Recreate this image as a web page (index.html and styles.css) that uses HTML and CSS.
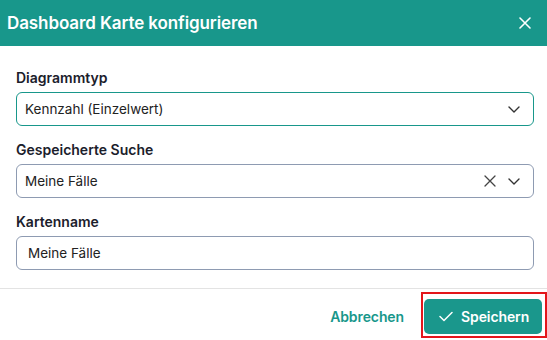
FILE: index.html
```html
<!DOCTYPE html>
<html>
<head>
    <meta charset="UTF-8">
    <title>Dashboard Karte konfigurieren</title>
    <link rel="stylesheet" href="styles.css">
</head>
<body>
    <div class="dialog">
        <div class="dialog-header">
            <h2>Dashboard Karte konfigurieren</h2>
            <button class="close-button" aria-label="Schließen">
                <svg width="12" height="12" viewBox="0 0 12 12"><path d="M1 1L11 11M11 1L1 11" stroke="#fff" stroke-width="1.6" stroke-linecap="round"/></svg>
            </button>
        </div>

        <div class="dialog-body">
            <div class="field">
                <label>Diagrammtyp</label>
                <div class="select focused">
                    <span class="value">Kennzahl (Einzelwert)</span>
                    <svg class="chevron" width="12" height="7" viewBox="0 0 12 7"><path d="M1 1L6 6L11 1" fill="none" stroke="#333" stroke-width="1.4" stroke-linecap="round" stroke-linejoin="round"/></svg>
                </div>
            </div>
            <div class="field">
                <label>Gespeicherte Suche</label>
                <div class="select">
                    <span class="value">Meine Fälle</span>
                    <svg class="clear" width="12" height="12" viewBox="0 0 12 12"><path d="M1 1L11 11M11 1L1 11" stroke="#444" stroke-width="1.3" stroke-linecap="round"/></svg>
                    <svg class="chevron" width="12" height="7" viewBox="0 0 12 7"><path d="M1 1L6 6L11 1" fill="none" stroke="#333" stroke-width="1.4" stroke-linecap="round" stroke-linejoin="round"/></svg>
                </div>
            </div>
            <div class="field">
                <label>Kartenname</label>
                <input type="text" class="text-input" value="Meine Fälle">
            </div>
        </div>

        <div class="dialog-footer">
            <button class="cancel-button">Abbrechen</button>
            <span class="highlight">
                <button class="save-button">
                    <svg width="14" height="11" viewBox="0 0 14 11"><path d="M1 5.5L5 9.5L13 1.5" fill="none" stroke="#fff" stroke-width="1.5" stroke-linecap="round" stroke-linejoin="round"/></svg>
                    Speichern
                </button>
            </span>
        </div>
    </div>
</body>
</html>
```

FILE: styles.css
```css
body {
    margin: 0;
    font-family: Inter, "Noto Sans", sans-serif;
    background: #fff;
    color: #1c2230;
}
.dialog {
    width: 547px;
    height: 340px;
    display: flex;
    flex-direction: column;
    overflow: hidden;
}
.dialog-header {
    height: 46px;
    background-color: #18978b;
    display: flex;
    align-items: center;
    justify-content: space-between;
    padding: 0 16px 0 7px;
    flex-shrink: 0;
}
.dialog-header h2 {
    margin: 0;
    color: #fff;
    font-size: 17px;
    font-weight: 600;
    letter-spacing: -0.1px;
}
.close-button {
    background: none;
    border: none;
    padding: 0;
    display: flex;
    cursor: pointer;
}
.dialog-body {
    padding: 22px 13px 18px 16px;
    display: flex;
    flex-direction: column;
    gap: 14px;
    border-bottom: 1px solid #e3e3e3;
}
.field {
    display: flex;
    flex-direction: column;
    gap: 4px;
}
.field label {
    font-size: 14px;
    line-height: 20px;
    font-weight: 600;
    color: #1b202b;
}
.select,
.text-input {
    box-sizing: border-box;
    height: 34px;
    border: 1px solid #8e9bb2;
    border-radius: 6px;
    font-family: inherit;
    font-size: 13.5px;
    color: #222;
}
.select {
    display: flex;
    align-items: center;
    padding: 0 13px 0 8px;
}
.select.focused {
    border-color: #18978b;
}
.select .value {
    flex: 1;
}
.select .clear {
    margin-right: 12px;
}
.text-input {
    width: 100%;
    padding: 0 11px;
    outline: none;
}
.dialog-footer {
    flex: 1;
    display: flex;
    justify-content: flex-end;
    align-items: flex-start;
    padding: 10px 5px 0 0;
}
.cancel-button {
    background: none;
    border: none;
    color: #18978b;
    font-family: inherit;
    font-size: 14px;
    font-weight: 600;
    height: 35px;
    padding: 0 20px 0 12px;
    letter-spacing: -0.1px;
    cursor: pointer;
}
.highlight {
    position: relative;
    display: flex;
}
.highlight::after {
    content: "";
    position: absolute;
    top: -7px;
    left: -3px;
    right: -5px;
    bottom: -4px;
    border: 2px solid #e3161b;
}
.save-button {
    display: flex;
    align-items: center;
    gap: 8px;
    height: 35px;
    width: 118px;
    padding: 0 0 0 15px;
    border: none;
    border-radius: 5px;
    background-color: #1a978c;
    color: #fff;
    font-family: inherit;
    font-size: 14px;
    font-weight: 600;
    letter-spacing: -0.1px;
    cursor: pointer;
}
```
